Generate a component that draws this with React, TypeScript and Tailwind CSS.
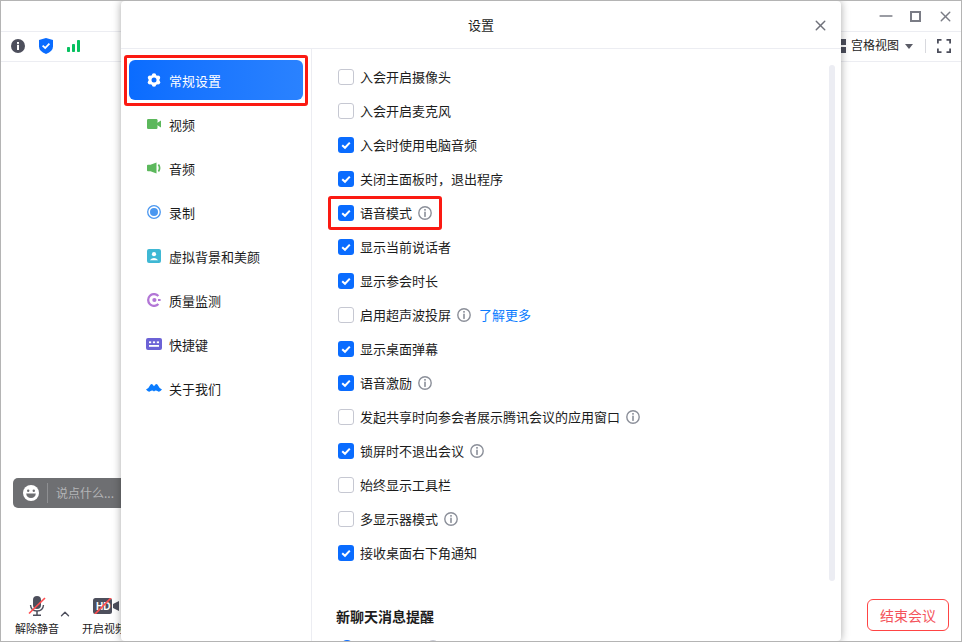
import React from 'react';
import { X, Minus, ChevronUp } from 'lucide-react';

const font = { fontFamily: '"Noto Sans CJK SC", "Liberation Sans", sans-serif' };

const Info = () => (
  <svg width="14" height="14" viewBox="0 0 14 14" fill="none" className="shrink-0">
    <circle cx="7" cy="7" r="6.2" stroke="#8b8f99" strokeWidth="1.4" />
    <rect x="6.2" y="3" width="1.6" height="1.7" fill="#8b8f99" />
    <rect x="6.2" y="5.7" width="1.6" height="5.2" fill="#8b8f99" />
  </svg>
);

const Check = ({ on }: { on: boolean }) =>
  on ? (
    <span className="w-4 h-4 rounded-[3px] bg-[#0a6cff] flex items-center justify-center shrink-0">
      <svg width="12" height="12" viewBox="0 0 12 12" fill="none">
        <path d="M2.2 6.2 L5 8.8 L9.8 3.6" stroke="#fff" strokeWidth="2" />
      </svg>
    </span>
  ) : (
    <span className="w-4 h-4 rounded-[3px] border border-[#c6c8d2] bg-white shrink-0" />
  );

const rows = [
  { label: '入会开启摄像头', on: false },
  { label: '入会开启麦克风', on: false },
  { label: '入会时使用电脑音频', on: true },
  { label: '关闭主面板时，退出程序', on: true },
  { label: '语音模式', on: true, info: true, boxed: true },
  { label: '显示当前说话者', on: true },
  { label: '显示参会时长', on: true },
  { label: '启用超声波投屏', on: false, info: true, link: '了解更多' },
  { label: '显示桌面弹幕', on: true },
  { label: '语音激励', on: true, info: true },
  { label: '发起共享时向参会者展示腾讯会议的应用窗口', on: false, info: true },
  { label: '锁屏时不退出会议', on: true, info: true },
  { label: '始终显示工具栏', on: false },
  { label: '多显示器模式', on: false, info: true },
  { label: '接收桌面右下角通知', on: true },
];

const navIcons: Record<string, React.ReactNode> = {
  general: (
    <svg width="14" height="14" viewBox="0 0 14 14">
      <g fill="#fff">
        <circle cx="7" cy="7" r="5.2" />
        <circle cx="7" cy="2.4" r="2.2" />
        <circle cx="7" cy="11.6" r="2.2" />
        <circle cx="3" cy="4.7" r="2.2" />
        <circle cx="11" cy="4.7" r="2.2" />
        <circle cx="3" cy="9.3" r="2.2" />
        <circle cx="11" cy="9.3" r="2.2" />
      </g>
      <circle cx="7" cy="7" r="2.5" fill="#0a6cff" />
    </svg>
  ),
  video: (
    <svg width="14" height="14" viewBox="0 0 14 14">
      <rect x="0" y="2" width="10.5" height="10" rx="1.2" fill="#5cb85c" />
      <path d="M10 6 L14 3.4 V10.6 L10 8z" fill="#5cb85c" />
    </svg>
  ),
  audio: (
    <svg width="14" height="14" viewBox="0 0 14 14" fill="none">
      <path d="M0 4.5 Q0 3.8 1 3.8 H3.5 L9.5 1.4 V12.6 L3.5 10.2 H1 Q0 10.2 0 9.5z" fill="#5cb85c" />
      <path d="M11.4 3.6 Q13.8 7 11.4 10.4" stroke="#5cb85c" strokeWidth="1.7" />
    </svg>
  ),
  record: (
    <svg width="14" height="14" viewBox="0 0 14 14" fill="none">
      <circle cx="7" cy="7" r="6.3" stroke="#4a97f0" strokeWidth="1.3" />
      <circle cx="7" cy="7" r="4" fill="#4a97f0" />
    </svg>
  ),
  bg: (
    <svg width="14" height="14" viewBox="0 0 14 14">
      <rect width="14" height="14" rx="2" fill="#3fb8d4" />
      <circle cx="7" cy="5.2" r="2.1" fill="#fff" />
      <path d="M2.8 11.2 Q7 6.8 11.2 11.2z" fill="#fff" />
    </svg>
  ),
  quality: (
    <svg width="14" height="14" viewBox="0 0 14 14" fill="none">
      <path d="M11.4 3 A5.9 5.9 0 1 0 11.4 11" stroke="#b276d6" strokeWidth="2.3" />
      <circle cx="7.4" cy="7" r="2.1" fill="#b276d6" />
      <rect x="11" y="6" width="2.6" height="2" fill="#b276d6" />
    </svg>
  ),
  keys: (
    <svg width="16" height="12" viewBox="0 0 16 12">
      <rect width="16" height="12" rx="2" fill="#6c62d6" />
      <rect x="3" y="3.4" width="2.2" height="1.8" fill="#fff" />
      <rect x="6.9" y="3.4" width="2.2" height="1.8" fill="#fff" />
      <rect x="10.8" y="3.4" width="2.2" height="1.8" fill="#fff" />
      <rect x="3" y="7" width="10" height="1.8" fill="#fff" />
    </svg>
  ),
  about: (
    <svg width="16" height="10" viewBox="0 0 16 10">
      <path d="M0 6.5 Q3 5 4.6 1.5 Q5.8 0 8 3.2 Q10.2 0 11.4 1.5 Q13 5 16 6.5 Q13.5 9.8 11.4 8 Q9.6 6.6 8 8.6 Q6.4 6.6 4.6 8 Q2.5 9.8 0 6.5z" fill="#0a7cff" />
    </svg>
  ),
};

const navItems = [
  { id: 'video', label: '视频', wide: false },
  { id: 'audio', label: '音频', wide: false },
  { id: 'record', label: '录制', wide: false },
  { id: 'bg', label: '虚拟背景和美颜', wide: false },
  { id: 'quality', label: '质量监测', wide: false },
  { id: 'keys', label: '快捷键', wide: true },
  { id: 'about', label: '关于我们', wide: true },
];

export default function App() {
  return (
    <div style={font} className="relative w-[962px] h-[642px] overflow-hidden bg-white border border-[#b4b4b4] flex flex-col text-[13px] text-[#1c1c1c]">
      {/* title bar */}
      <div className="h-[31px] shrink-0 border-b border-[#ecedf2] flex items-center justify-end pr-[7px] text-[#7a7c85]">
        <Minus size={20} strokeWidth={2} />
        <span className="ml-[14px] w-[11px] h-[11px] border-2 border-[#7a7c85]" />
        <X size={17} strokeWidth={2} className="ml-[16px]" />
      </div>

      {/* toolbar */}
      <div className="h-[30px] shrink-0 border-b border-[#ecedf2] flex items-center pl-[10px] pr-[10px] pb-px">
        <svg width="14" height="14" viewBox="0 0 14 14" className="mr-[14px]">
          <circle cx="7" cy="7" r="7" fill="#4d4f5c" />
          <rect x="6" y="3" width="2" height="1.9" fill="#fff" />
          <rect x="6" y="5.8" width="2" height="5.2" fill="#fff" />
        </svg>
        <svg width="14" height="16" viewBox="0 0 14 16" className="mr-[14px]">
          <path d="M7 0 L14 2 V8.5 Q14 13 7 16 Q0 13 0 8.5 V2z" fill="#0a6cff" />
          <path d="M3.6 7.6 L6.2 10 L10.4 5.6" stroke="#fff" strokeWidth="1.8" fill="none" />
        </svg>
        <svg width="14" height="12" viewBox="0 0 14 12">
          <rect x="0" y="7" width="3" height="5" rx="0.8" fill="#07c160" />
          <rect x="5" y="4" width="3" height="8" rx="0.8" fill="#07c160" />
          <rect x="10" y="0" width="3" height="12" rx="0.8" fill="#07c160" />
        </svg>
        <div className="ml-auto flex items-center">
          <svg width="12" height="14" viewBox="0 0 12 14" className="mr-[4px]">
            <rect x="0" y="0" width="5" height="6" fill="#4d4f5c" />
            <rect x="0" y="8" width="5" height="6" fill="#4d4f5c" />
            <rect x="6" y="0" width="5" height="6" fill="#4d4f5c" />
            <rect x="6" y="8" width="5" height="6" fill="#4d4f5c" />
          </svg>
          <span className="text-[12px] leading-none pb-[2px]">宫格视图</span>
          <span className="ml-[6px] w-0 h-0 border-x-[4px] border-x-transparent border-t-[5px] border-t-[#5a5c66]" />
          <span className="ml-[12px] w-px h-[14px] bg-[#d8d9de]" />
          <svg width="14" height="14" viewBox="0 0 14 14" fill="none" className="ml-[11px]" stroke="#4d4f5c" strokeWidth="1.8">
            <path d="M.9 4.5 V.9 H4.5 M9.5 .9 H13.1 V4.5 M13.1 9.5 V13.1 H9.5 M4.5 13.1 H.9 V9.5" />
          </svg>
        </div>
      </div>

      {/* meeting area */}
      <div className="flex-1 flex flex-col justify-end">
        <div className="ml-[12px] mb-[83px] w-[130px] h-[30px] rounded-[5px] bg-[#6e6f72] flex items-center pl-[10px]">
          <svg width="16" height="16" viewBox="0 0 16 16" className="shrink-0">
            <circle cx="8" cy="8" r="8" fill="#fff" />
            <circle cx="5.2" cy="5.8" r="1.2" fill="#6e6f72" />
            <circle cx="10.8" cy="5.8" r="1.2" fill="#6e6f72" />
            <path d="M3.2 8.6 H12.8 Q12.4 13 8 13 Q3.6 13 3.2 8.6z" fill="#6e6f72" />
          </svg>
          <span className="ml-[8px] w-px h-5 bg-[#8e8f92]" />
          <span className="ml-[8px] text-[12px] text-[#b4b5b7]">说点什么...</span>
        </div>
        <div className="h-[50px] flex items-start pl-[14px]">
          <div className="flex flex-col items-center w-[44px] pt-[5px]">
            <svg width="20" height="20" viewBox="0 0 20 20" fill="none">
              <rect x="6" y="0" width="8" height="13" rx="4" fill="#4d4f5c" />
              <path d="M3.5 9 Q4 15 10 15 Q16 15 16.5 9" stroke="#4d4f5c" strokeWidth="1.4" />
              <path d="M10 15 V19 M6 19.3 H14" stroke="#4d4f5c" strokeWidth="1.5" />
              <path d="M2 17.5 L18 2" stroke="#ff4d4f" strokeWidth="1.7" />
            </svg>
            <span className="mt-[4px] text-[11px] leading-[16px] whitespace-nowrap">解除静音</span>
          </div>
          <ChevronUp size={14} strokeWidth={2.4} className="-ml-px mt-[16px] text-[#4d4f5c]" />
          <div className="ml-[10px] flex flex-col items-start w-[44px] pt-[7px]">
            <svg width="26" height="16" viewBox="0 0 26 16" fill="none" className="ml-[11px] shrink-0">
              <rect x="0" y="0" width="19" height="16" rx="2.5" fill="#4d4f5c" />
              <path d="M20 6 L26 3 V13 L20 10z" fill="#4d4f5c" />
              <text x="3" y="12" fontSize="10" fontWeight="700" fill="#fff" fontFamily="Liberation Sans, sans-serif">HD</text>
              <path d="M2 16 L18 0" stroke="#ff4d4f" strokeWidth="1.7" />
            </svg>
            <span className="mt-[6px] text-[11px] leading-[16px] whitespace-nowrap">开启视频</span>
          </div>
          <button className="ml-auto mr-[12px] mt-[8px] w-[82px] h-[32px] rounded-[6px] border border-[#ff4444] text-[14px] text-[#f4545c] bg-white">
            结束会议
          </button>
        </div>
      </div>

      {/* settings dialog */}
      <div className="absolute left-[120px] top-0 w-[720px] h-[640px] bg-white rounded-[4px] shadow-[0_0_8px_rgba(0,0,0,0.35)] flex flex-col overflow-hidden">
        <div className="relative h-[48px] shrink-0 border-b border-[#ecedf2] flex items-center justify-center">
          <span className="text-[13px]">设置</span>
          <X size={17} strokeWidth={2} className="absolute right-[12px] top-[16px] text-[#6f717a]" />
        </div>
        <div className="flex-1 flex min-h-0">
          {/* left nav */}
          <div className="relative w-[191px] shrink-0 border-r border-[#ecedf2] pt-[11px] px-2">
            <div className="h-10 w-[174px] rounded-[6px] bg-gradient-to-r from-[#0a6cff] to-[#2a82ff] text-white flex items-center pl-[18px] gap-2">
              {navIcons.general}
              <span className="leading-none">常规设置</span>
            </div>
            {/* red annotation */}
            <div className="absolute left-[3px] top-[6px] w-[184px] h-[51px] border-[3px] border-[#fb1a12] rounded-[3px]" />
            <div className="mt-[2px] flex flex-col">
              {navItems.map((item) => (
                <div key={item.id} className="h-[44px] flex items-center pl-[18px]">
                  <span className={item.wide ? 'w-4 flex -ml-[1px] mr-[7px]' : 'w-4 flex mr-[6px]'}>{navIcons[item.id]}</span>
                  <span className="leading-none">{item.label}</span>
                </div>
              ))}
            </div>
          </div>

          {/* right pane */}
          <div className="relative flex-1 pl-[26px] pt-[11px] overflow-hidden">
            <div className="flex flex-col">
              {rows.map((r) => (
                <div key={r.label} className="relative h-[34px] flex items-center">
                  <Check on={r.on} />
                  <span className="ml-[6px] leading-none whitespace-nowrap pb-[2px]">{r.label}</span>
                  {r.info && (
                    <span className="ml-[6px]">
                      <Info />
                    </span>
                  )}
                  {r.link && <span className="ml-[8px] text-[#0a7cff] leading-none pb-[2px]">{r.link}</span>}
                  {r.boxed && <div className="absolute left-[-10px] top-0 w-[114px] h-[34px] border-[3px] border-[#fb1a12] rounded-[3px]" />}
                </div>
              ))}
            </div>
            <div className="mt-[36px] -ml-[2px] text-[14px] font-bold leading-[20px]">新聊天消息提醒</div>
            <div className="mt-[14px] flex">
              <span className="ml-[2px] w-[14px] h-[14px] rounded-full bg-[#0a6cff]" />
              <span className="ml-[72px] w-[14px] h-[14px] rounded-full border border-[#c6c8d2]" />
            </div>
            {/* scrollbar */}
            <div className="absolute right-[6px] top-[16px] w-[6px] h-[516px] rounded-[3px] bg-[#ecedf3]" />
          </div>
        </div>
      </div>
    </div>
  );
}
